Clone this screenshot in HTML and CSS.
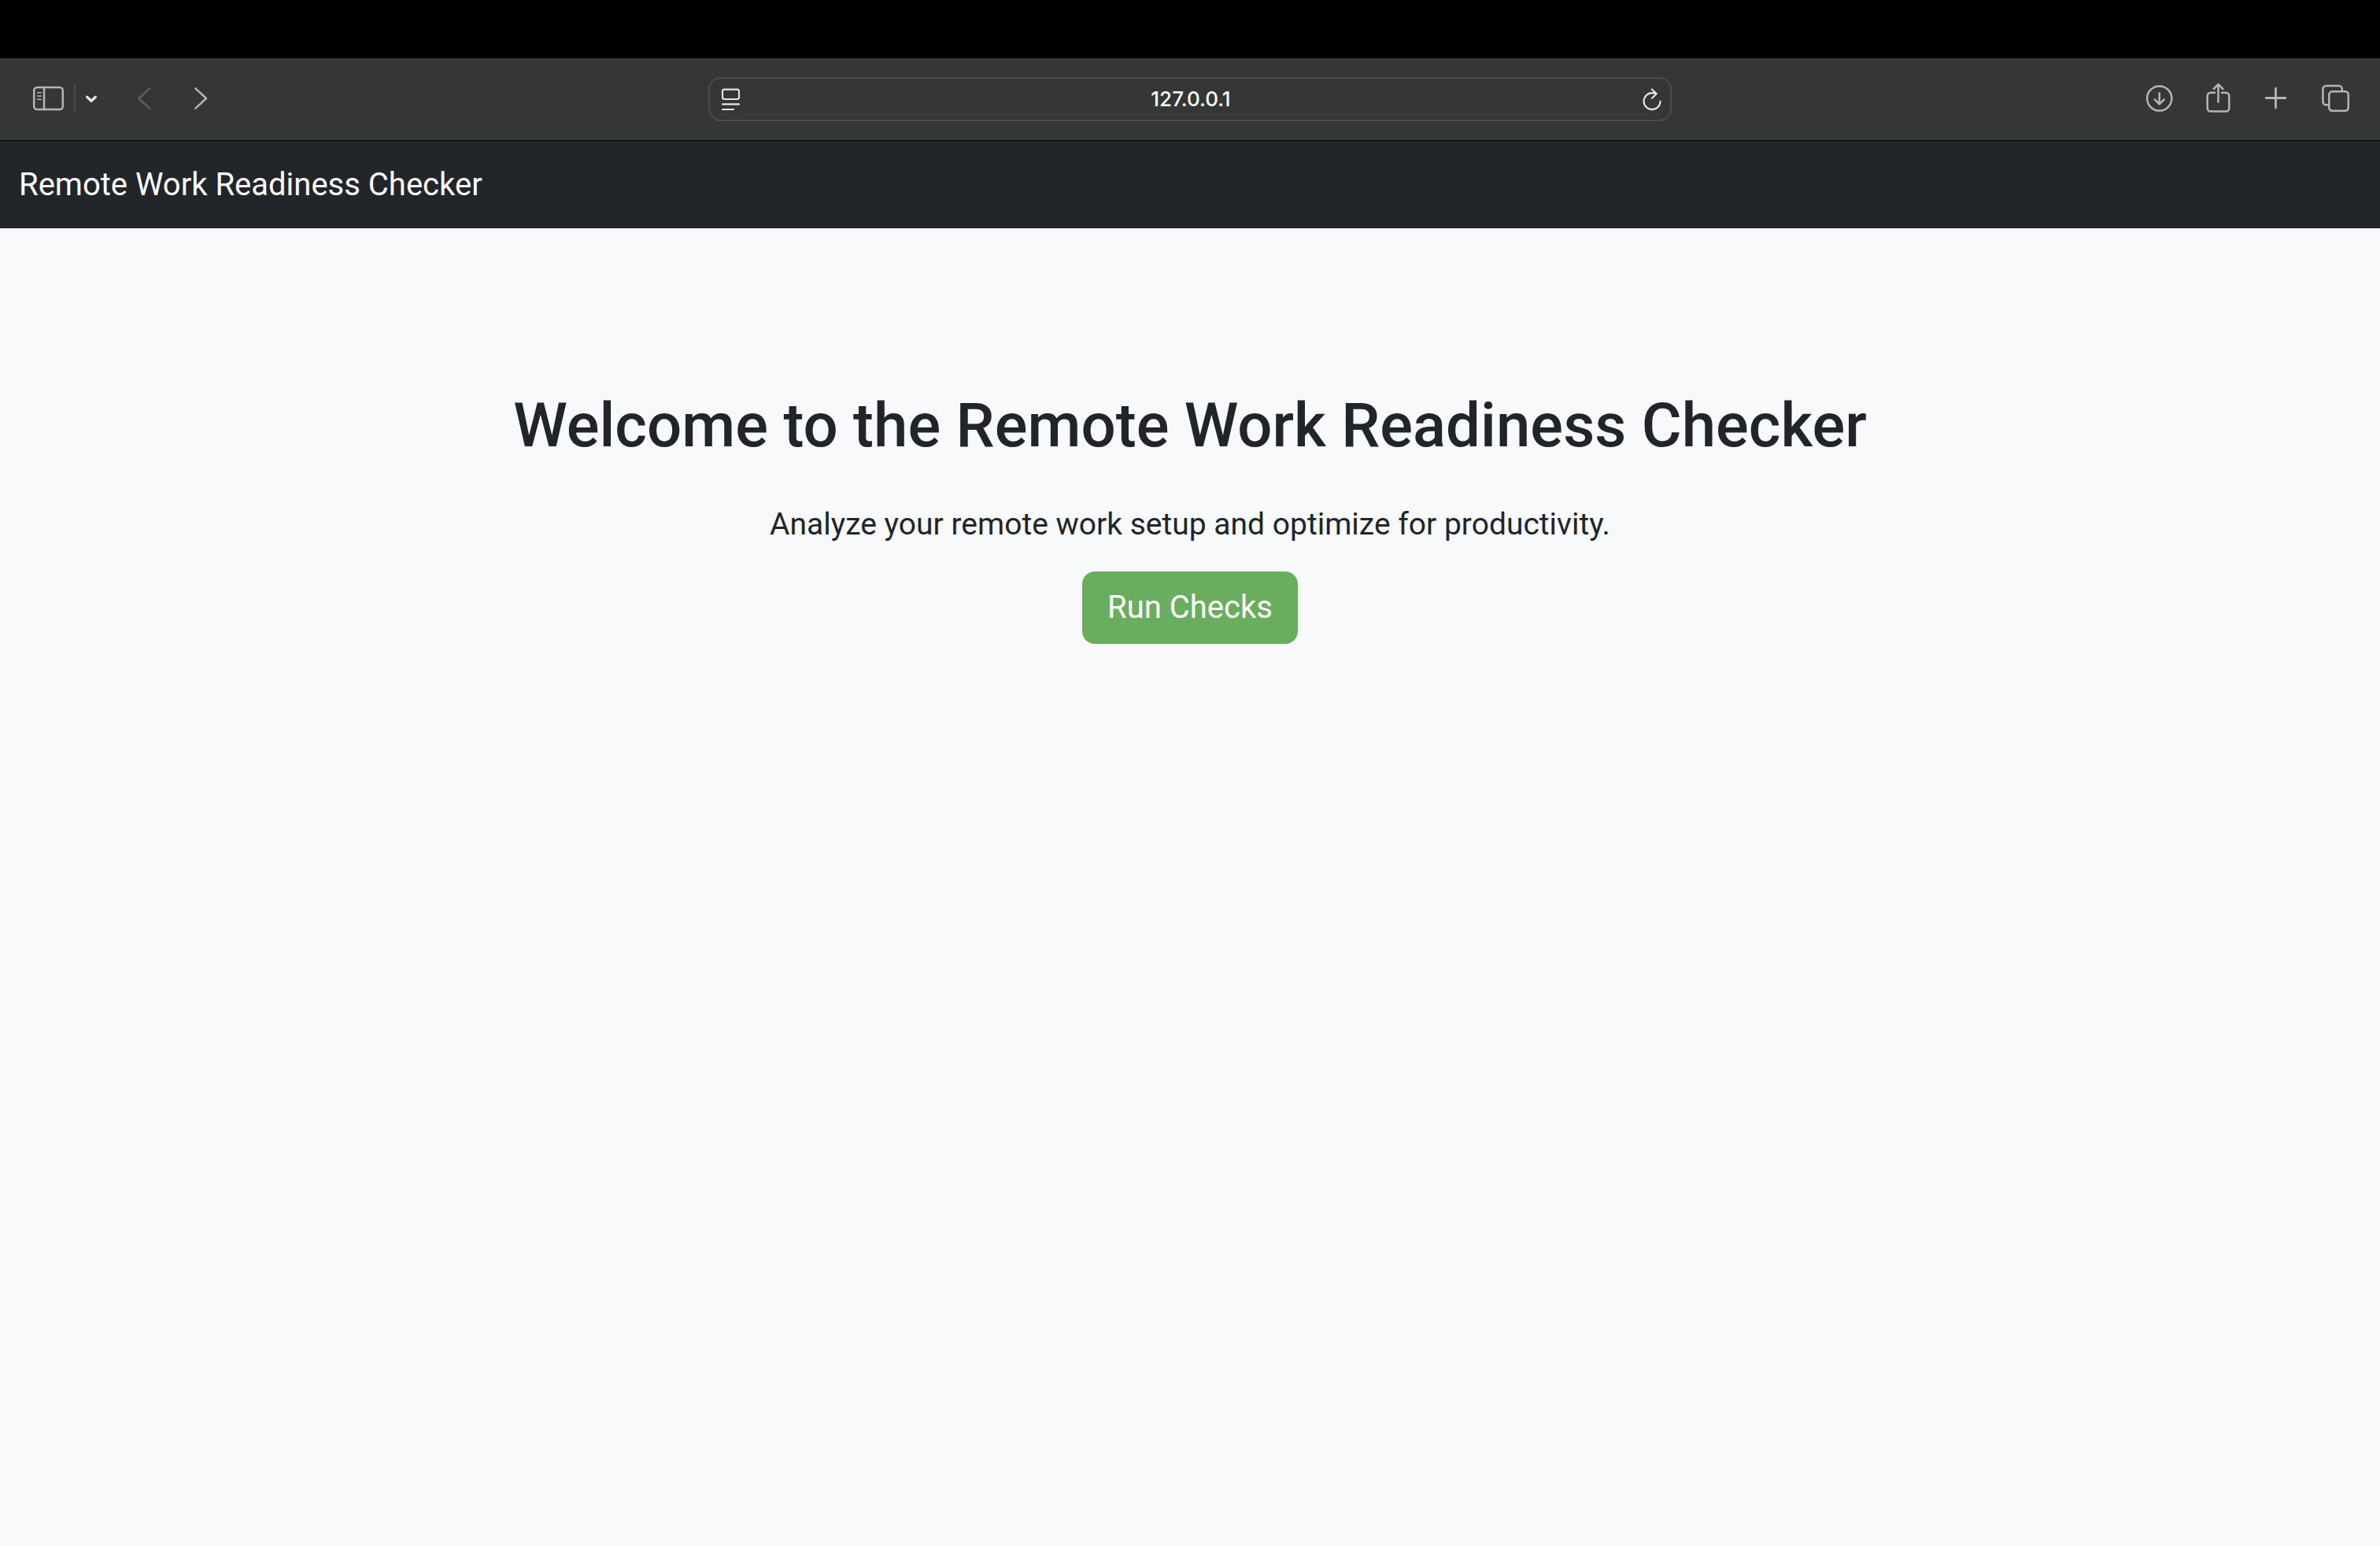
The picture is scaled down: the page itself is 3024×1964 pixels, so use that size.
FILE: index.html
```html
<!DOCTYPE html>
<html lang="en">
<head>
  <meta charset="utf-8">
  <meta name="viewport" content="width=device-width, initial-scale=1">
  <title>Remote Work Readiness Checker</title>
  <link rel="stylesheet" href="styles.css">
</head>
<body>
  <div class="screen-top"></div>
  <div class="toolbar">
    <div class="toolbar-start">
      <button class="tool" type="button" aria-label="Show sidebar">
        <svg class="icon" width="44" height="44" viewBox="0 0 44 44">
          <rect x="3.2" y="7" width="36.6" height="28" rx="4"/>
          <path d="M16 7v28"/>
          <path class="thin" d="M7.7 13.7h4.6M7.7 18h4.6M7.7 22.3h4.6"/>
        </svg>
      </button>
      <span class="divider"></span>
      <button class="tool" type="button" aria-label="Tab groups">
        <svg class="icon icon-bright" width="20" height="44" viewBox="0 0 20 44">
          <path class="thick" d="M4.700 19.200L10 24.200l5.300-5"/>
        </svg>
      </button>
      <button class="tool tool-nav" type="button" aria-label="Back" disabled>
        <svg class="icon icon-dim" width="28" height="44" viewBox="0 0 28 44">
          <path d="M20 8.300L6.400 21 20 33.700"/>
        </svg>
      </button>
      <button class="tool tool-nav" type="button" aria-label="Forward">
        <svg class="icon" width="28" height="44" viewBox="0 0 28 44">
          <path d="M6.400 8.300L20 21 6.400 33.700"/>
        </svg>
      </button>
    </div>
    <form class="address">
      <button class="tool" type="button" aria-label="Page menu">
        <svg class="icon icon-bright" width="28" height="44" viewBox="0 0 28 44">
          <rect class="fine" x="4" y="9.600" width="21" height="12.400" rx="2.500"/>
          <path class="fine" d="M4 28.400h21M4 35h14"/>
        </svg>
      </button>
      <input class="address-input" type="text" aria-label="Address" value="127.0.0.1">
      <button class="tool" type="button" aria-label="Reload">
        <svg class="icon icon-bright" width="28" height="44" viewBox="0 0 28 44">
          <path class="fine" d="M25.600 24.600a10.500 10.500 0 1 1-10.500-10.500c2 0 3.600.3 5 1M14.800 9.400l6 5.700-5.800 5.600"/>
        </svg>
      </button>
    </form>
    <div class="toolbar-end">
      <button class="tool" type="button" aria-label="Downloads">
        <svg class="icon" width="44" height="44" viewBox="0 0 44 44">
          <circle cx="19.700" cy="21" r="15.600"/>
          <path d="M19.700 14.200v13.800M13.800 22.400l5.900 5.900 5.900-5.900"/>
        </svg>
      </button>
      <button class="tool" type="button" aria-label="Share">
        <svg class="icon" width="44" height="44" viewBox="0 0 44 44">
          <path d="M16 13.800h-5.300a4 4 0 0 0-4 4v15.700a4 4 0 0 0 4 4h19.600a4 4 0 0 0 4-4v-15.700a4 4 0 0 0-4-4h-5.300"/>
          <path d="M20.500 25.500v-22M14.700 9l5.800-5.800 5.800 5.800"/>
        </svg>
      </button>
      <button class="tool" type="button" aria-label="New tab">
        <svg class="icon" width="44" height="44" viewBox="0 0 44 44">
          <path class="medium" d="M19.500 8.200v24.800M7.100 20.500h24.800"/>
        </svg>
      </button>
      <button class="tool" type="button" aria-label="Tab overview">
        <svg class="icon" width="44" height="44" viewBox="0 0 44 44">
          <path d="M12 29.300h-2.600a4 4 0 0 1-4-4V9a4 4 0 0 1 4-4h16.400a4 4 0 0 1 4 4v2.500"/>
          <rect x="13.300" y="12.200" width="24.500" height="24.500" rx="4"/>
        </svg>
      </button>
    </div>
  </div>
  <nav class="navbar">
    <a class="brand" href="#">Remote Work Readiness Checker</a>
  </nav>
  <main class="hero">
    <h1 class="hero-title">Welcome to the Remote Work Readiness Checker</h1>
    <p class="hero-lead">Analyze your remote work setup and optimize for productivity.</p>
    <button class="run-button" type="button">Run Checks</button>
  </main>
</body>
</html>
```
FILE: styles.css
```css
* {
  box-sizing: border-box;
}

body {
  margin: 0;
  min-height: 100vh;
  background: #f8f9fb;
  color: #212529;
  font-family: Roboto, "Liberation Sans", sans-serif;
  font-size: 40px;
  line-height: 60px;
}

button,
input {
  margin: 0;
  padding: 0;
  border: 0;
  background: none;
  color: inherit;
  font: inherit;
}

.screen-top {
  height: 74px;
  background: #000;
}

.toolbar {
  display: grid;
  grid-template-columns: 1fr minmax(0, 1224px) 1fr;
  align-items: center;
  height: 105px;
  border-bottom: 1px solid #000;
  background: #353736;
}

.toolbar-start,
.toolbar-end {
  display: flex;
  align-items: center;
}

.toolbar-start {
  gap: 10px;
  padding-left: 40px;
}

.toolbar-end {
  justify-content: flex-end;
  gap: 30px;
  padding-right: 34px;
}

.tool {
  display: block;
  flex: none;
}

.tool-nav {
  margin-left: 34px;
}

.divider {
  width: 2px;
  height: 36px;
  background: #4b4d4c;
}

.icon {
  display: block;
  fill: none;
  stroke: #b4b6b5;
  stroke-width: 2.5;
  stroke-linecap: round;
  stroke-linejoin: round;
}

.icon-bright {
  stroke: #e4e5e4;
}

.icon-dim {
  stroke: #5c5e5d;
}

.thin {
  stroke-width: 1.6;
}

.fine {
  stroke-width: 2.1;
}

.medium {
  stroke-width: 2.8;
}

.thick {
  stroke-width: 3.4;
}

.address {
  display: flex;
  align-items: center;
  height: 56px;
  padding: 0 10px 0 12px;
  border: 2px solid #4b4d4c;
  border-radius: 16px;
}

.address-input {
  flex: 1;
  min-width: 0;
  color: #fff;
  font-family: Inter, "Liberation Sans", sans-serif;
  font-size: 26px;
  font-weight: 500;
  line-height: 32px;
  text-align: center;
}

.navbar {
  display: flex;
  align-items: center;
  padding: 26px 24px 25px;
  background: #22252a;
}

.brand {
  color: #fff;
  text-decoration: none;
}

.hero {
  padding: 200px 24px;
  text-align: center;
}

.hero-title {
  margin: 0 0 44px;
  font-size: 78px;
  font-weight: 500;
  line-height: 102px;
}

.hero-lead {
  margin: 0 0 30px;
  font-size: 39px;
}

.run-button {
  padding: 16px 32px;
  border-radius: 16px;
  background: #69ae5e;
  color: #fff;
}
```
